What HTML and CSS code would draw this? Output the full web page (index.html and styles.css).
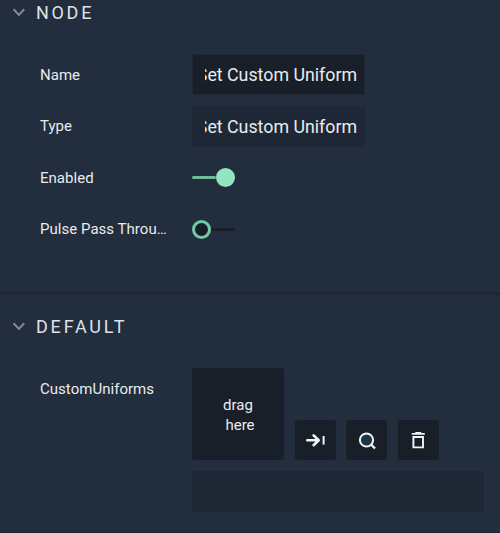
FILE: index.html
```html
<!DOCTYPE html>
<html lang="en">
<head>
<meta charset="utf-8">
<title>Node properties</title>
<link rel="stylesheet" href="styles.css">
</head>
<body>
<main class="panel">
  <section class="section section-node">
    <h2 class="heading">
      <svg class="chevron" width="14" height="10" viewBox="0 0 14 10"><path d="M1.6 2.3 6.9 7.9 12.2 2.3"/></svg>
      <span>NODE</span>
    </h2>
    <div class="rows">
      <div class="row"><span class="label">Name</span><div class="field"><span class="value">Set Custom Uniform</span></div></div>
      <div class="row"><span class="label">Type</span><div class="field readonly"><span class="value">Set Custom Uniform</span></div></div>
      <div class="row"><span class="label">Enabled</span><div class="toggle on"><i class="track"></i><i class="knob"></i></div></div>
      <div class="row"><span class="label">Pulse Pass Through</span><div class="toggle"><i class="knob"></i><i class="track"></i></div></div>
    </div>
  </section>
  <section class="section section-default">
    <h2 class="heading">
      <svg class="chevron" width="14" height="10" viewBox="0 0 14 10"><path d="M1.6 2.3 6.9 7.9 12.2 2.3"/></svg>
      <span>DEFAULT</span>
    </h2>
    <div class="asset">
      <span class="label">CustomUniforms</span>
      <div class="asset-body">
        <div class="asset-tools">
          <div class="drop"><span>drag</span><span class="second">here</span></div>
          <button class="tool" aria-label="Assign"><svg width="41" height="40" viewBox="0 0 41 40"><path class="arrow" d="M12.3 20.3H23M18.6 15.4 23.7 20.3 18.6 25.2"/><path class="bar" d="M28.6 16V24.6"/></svg></button>
          <button class="tool" aria-label="Find"><svg width="41" height="40" viewBox="0 0 41 40"><circle class="lens" cx="20.5" cy="20" r="6.6"/><path class="handle" d="M25 24.5 29 28.5"/></svg></button>
          <button class="tool" aria-label="Delete"><svg width="41" height="40" viewBox="0 0 41 40"><path class="bin" d="M13.8 13.9H26.8M17.3 12.9H23.3M15.4 17H25V27.4H15.4Z"/></svg></button>
        </div>
        <div class="path-field"></div>
      </div>
    </div>
  </section>
</main>
</body>
</html>
```
FILE: styles.css
```css
* { box-sizing: border-box; }

body {
  margin: 0;
  background: #222d3d;
  color: #e9ebee;
  font-family: Roboto, "Liberation Sans", sans-serif;
  font-size: 15px;
}

.panel {
  height: 533px;
  overflow: hidden;
  border-bottom: 1px solid #1c2536;
}

.section-node {
  height: 295px;
  border-bottom: 3px solid #1d2736;
}

.heading {
  display: flex;
  align-items: center;
  gap: 10px;
  height: 24px;
  margin: 0;
  padding-left: 12px;
  color: #dfe2e5;
  font-size: 18px;
  font-weight: 400;
  letter-spacing: 2.7px;
}

.section-default .heading { 
  margin-top: 19px;
  letter-spacing: 2.8px;
}

.chevron {
  fill: none;
  stroke: #858c97;
  stroke-width: 2;
}

.rows { padding: 25px 0 0 40px; }

.row {
  display: flex;
  align-items: center;
  height: 51.5px;
}

.label {
  flex: none;
  width: 128px;
  margin-right: 24px;
  overflow: hidden;
  text-overflow: ellipsis;
  white-space: nowrap;
  letter-spacing: 0.03px;
}

.field {
  display: flex;
  width: 173px;
  height: 41px;
  padding: 0 7px 0 12px;
  border: 1px solid #1e2836;
  background: #191f28;
  font-size: 17.8px;
}

.readonly { background: #1e2735; }

.value {
  display: flex;
  align-items: center;
  justify-content: flex-end;
  width: 152px;
  overflow: hidden;
  white-space: nowrap;
}

.toggle {
  display: flex;
  align-items: center;
  width: 43px;
}

.track {
  flex: 1;
  height: 3px;
  border-radius: 2px;
  background: #191f28;
}

.knob {
  width: 19px;
  height: 19px;
  border: 3px solid #74c8a5;
  border-radius: 50%;
  background: #191f28;
}

.on .track { background: #6dbd9d; }

.on .knob {
  border-color: #92e5c1;
  background: #92e5c1;
}

.asset {
  display: flex;
  padding: 30px 0 0 40px;
}

.asset > .label { margin-top: 12px; }

.asset-tools {
  display: flex;
  align-items: flex-end;
  gap: 10.5px;
}

.drop {
  display: flex;
  flex-direction: column;
  align-items: center;
  justify-content: center;
  width: 92px;
  height: 92px;
  padding-top: 2px;
  border-radius: 3px;
  background: #191f28;
  line-height: 20px;
}

.second { padding-left: 4px; }

.tool {
  width: 41px;
  height: 40px;
  padding: 0;
  border: 0;
  border-radius: 3px;
  background: #191f28;
}

.tool svg {
  display: block;
  fill: none;
  stroke: #f2f4f5;
  stroke-width: 2;
}

.arrow { stroke-width: 2.6; stroke-linecap: round; stroke-linejoin: round; }
.bar { stroke-width: 2; }
.lens { fill: #1d3448; }
.handle { stroke-width: 2.4; }
.bin { stroke-width: 1.9; }

.path-field {
  width: 292px;
  height: 41px;
  margin-top: 11px;
  border: 1px solid #1e2834;
  background: #1e2734;
}
```
